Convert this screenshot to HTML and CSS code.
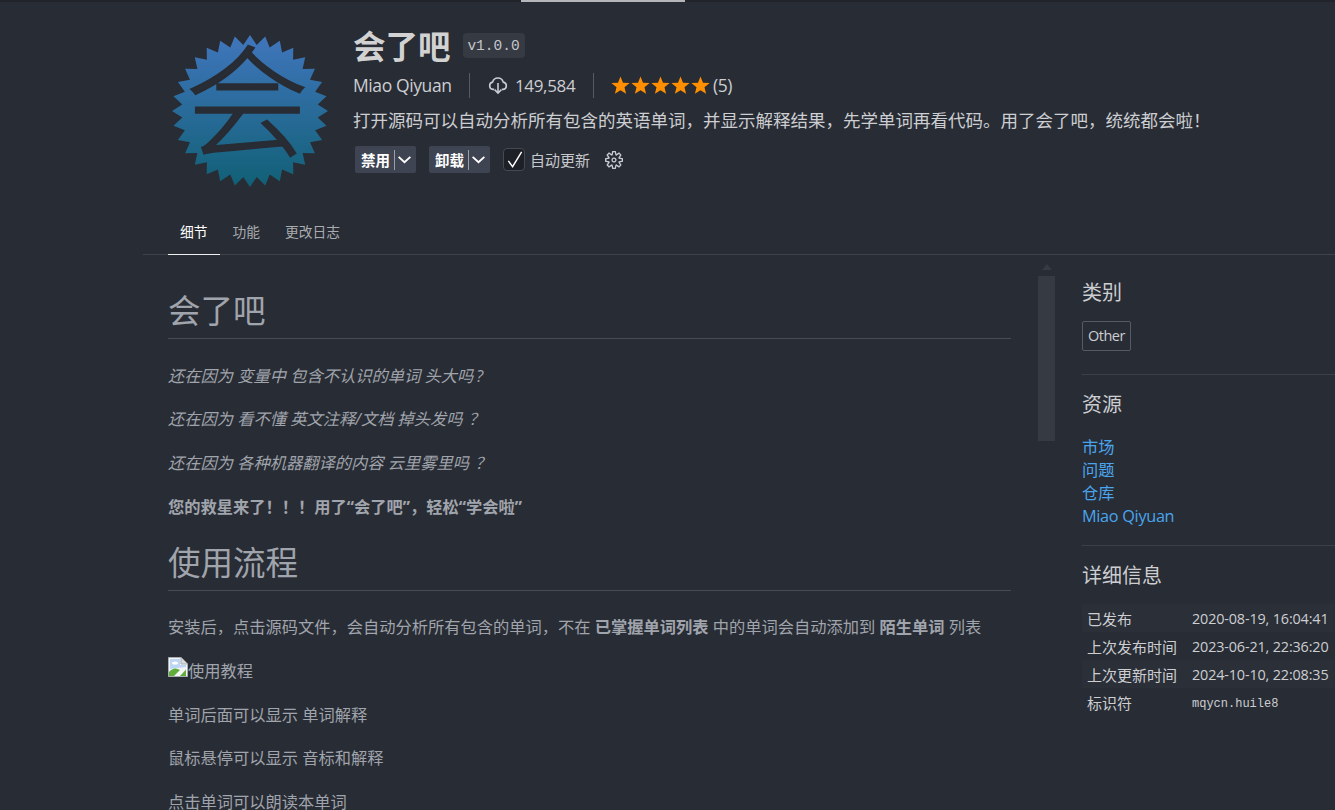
FILE: index.html
```html
<!DOCTYPE html>
<html lang="zh-CN">
<head>
<meta charset="utf-8">
<title>会了吧</title>
<link rel="stylesheet" href="styles.css">
</head>
<body>
<div class="topstrip"><div class="topstrip-active"></div></div>
<div class="page">
  <header class="header">
    <svg class="logo" viewBox="-78 -78 156 156" preserveAspectRatio="none">
      <defs>
        <linearGradient id="lg" x1="0" y1="0" x2="0" y2="1">
          <stop offset="0" stop-color="#4076bd"/>
          <stop offset="1" stop-color="#116076"/>
        </linearGradient>
      </defs>
      <polygon fill="url(#lg)" points="0,-78 6.7,-67.7 15.2,-76.5 19.7,-65.1 29.8,-72.1 32.1,-60 43.3,-64.9 43.1,-52.6 55.2,-55.2 52.6,-43.1 64.9,-43.3 60,-32.1 72.1,-29.8 65.1,-19.7 76.5,-15.2 67.7,-6.7 78,0 67.7,6.7 76.5,15.2 65.1,19.7 72.1,29.8 60,32.1 64.9,43.3 52.6,43.1 55.2,55.2 43.1,52.6 43.3,64.9 32.1,60 29.8,72.1 19.7,65.1 15.2,76.5 6.7,67.7 0,78 -6.7,67.7 -15.2,76.5 -19.7,65.1 -29.8,72.1 -32.1,60 -43.3,64.9 -43.1,52.6 -55.2,55.2 -52.6,43.1 -64.9,43.3 -60,32.1 -72.1,29.8 -65.1,19.7 -76.5,15.2 -67.7,6.7 -78,0 -67.7,-6.7 -76.5,-15.2 -65.1,-19.7 -72.1,-29.8 -60,-32.1 -64.9,-43.3 -52.6,-43.1 -55.2,-55.2 -43.1,-52.6 -43.3,-64.9 -32.1,-60 -29.8,-72.1 -19.7,-65.1 -15.2,-76.5 -6.7,-67.7"/>
      <text class="logo-glyph" x="-3" y="37" text-anchor="middle">会</text>
    </svg>
    <div class="details">
      <div class="title-row">
        <span class="title">会了吧</span>
        <span class="version">v1.0.0</span>
      </div>
      <div class="meta-row">
        <span class="author">Miao Qiyuan</span>
        <span class="sep"></span>
        <span class="installs">
          <svg class="cloud" viewBox="0 0 20 20" fill="none" stroke="#c8ccd2" stroke-width="1.6">
            <path d="M6.2 14.4H5a3.7 3.7 0 0 1-.4-7.3 5.5 5.5 0 0 1 10.6 0 3.7 3.7 0 0 1 .1 7.3h-1.5"/>
            <path d="M10 8v10M6.6 14.6l3.4 3.4 3.4-3.4"/>
          </svg>
          149,584
        </span>
        <span class="sep"></span>
        <span class="rating">
          <svg class="star" viewBox="0 0 20 20"><polygon points="10,0.5 12.6,7 19.6,7.4 14.2,11.9 15.9,18.8 10,15 4.1,18.8 5.8,11.9 0.4,7.4 7.4,7"/></svg>
          <svg class="star" viewBox="0 0 20 20"><polygon points="10,0.5 12.6,7 19.6,7.4 14.2,11.9 15.9,18.8 10,15 4.1,18.8 5.8,11.9 0.4,7.4 7.4,7"/></svg>
          <svg class="star" viewBox="0 0 20 20"><polygon points="10,0.5 12.6,7 19.6,7.4 14.2,11.9 15.9,18.8 10,15 4.1,18.8 5.8,11.9 0.4,7.4 7.4,7"/></svg>
          <svg class="star" viewBox="0 0 20 20"><polygon points="10,0.5 12.6,7 19.6,7.4 14.2,11.9 15.9,18.8 10,15 4.1,18.8 5.8,11.9 0.4,7.4 7.4,7"/></svg>
          <svg class="star" viewBox="0 0 20 20"><polygon points="10,0.5 12.6,7 19.6,7.4 14.2,11.9 15.9,18.8 10,15 4.1,18.8 5.8,11.9 0.4,7.4 7.4,7"/></svg>
          <span class="rating-count">(5)</span>
        </span>
      </div>
      <div class="description">打开源码可以自动分析所有包含的英语单词，并显示解释结果，先学单词再看代码。用了会了吧，统统都会啦！</div>
      <div class="actions">
        <div class="action-btn">
          <span class="action-label">禁用</span>
          <span class="action-div"></span>
          <svg class="chev" viewBox="0 0 16 16" fill="none" stroke="#fff" stroke-width="1.8"><path d="M2.5 5.5L8 10.5l5.5-5"/></svg>
        </div>
        <div class="action-btn">
          <span class="action-label">卸载</span>
          <span class="action-div"></span>
          <svg class="chev" viewBox="0 0 16 16" fill="none" stroke="#fff" stroke-width="1.8"><path d="M2.5 5.5L8 10.5l5.5-5"/></svg>
        </div>
        <span class="checkbox">
          <svg class="check" viewBox="0 0 20 20" fill="none" stroke="#fff" stroke-width="1.5"><path d="M3.5 11.5l4.5 6L17.5 2"/></svg>
        </span>
        <span class="auto-label">自动更新</span>
        <svg class="gear" viewBox="0 0 24 24" fill="#c8ccd2">
          <path fill-rule="evenodd" clip-rule="evenodd" d="M19.85 8.75l4.15.83v4.84l-4.15.83 2.35 3.52-3.43 3.43-3.52-2.35-.83 4.15H9.58l-.83-4.15-3.52 2.35-3.43-3.43 2.35-3.52L0 14.42V9.58l4.15-.83L1.8 5.23 5.23 1.8l3.52 2.35L9.58 0h4.84l.83 4.15 3.52-2.35 3.43 3.43-2.35 3.52zm-1.57 5.07l4-.81v-2l-4-.81-.54-1.3 2.29-3.43-1.43-1.43-3.43 2.29-1.3-.54-.81-4h-2l-.81 4-1.3.54-3.43-2.29-1.43 1.43L6.38 8.9l-.54 1.3-4 .81v2l4 .81.54 1.3-2.29 3.43 1.43 1.43 3.43-2.29 1.3.54.81 4h2l.81-4 1.3-.54 3.43 2.29 1.43-1.43-2.29-3.43.54-1.3zm-8.186-4.672A3.43 3.43 0 0 1 12 8.57 3.44 3.44 0 0 1 15.43 12a3.43 3.43 0 1 1-5.336-2.852zm.956 4.274c.281.188.612.288.95.288A1.7 1.7 0 0 0 13.71 12a1.71 1.71 0 1 0-2.66 1.422z"/>
        </svg>
      </div>
    </div>
  </header>
  <nav class="tabs">
    <span class="tab tab-active">细节</span>
    <span class="tab">功能</span>
    <span class="tab">更改日志</span>
  </nav>
  <div class="body-row">
    <main class="readme">
      <h1 class="rh">会了吧</h1>
      <p class="rp"><em>还在因为 变量中 包含不认识的单词 头大吗<span class="qm">?</span></em></p>
      <p class="rp"><em>还在因为 看不懂 英文注释/文档 掉头发吗<span class="qf">？</span></em></p>
      <p class="rp"><em>还在因为 各种机器翻译的内容 云里雾里吗<span class="qf">？</span></em></p>
      <p class="rp"><strong>您的救星来了！！！用了“会了吧”，轻松“学会啦”</strong></p>
      <h1 class="rh rh-second">使用流程</h1>
      <p class="rp">安装后，点击源码文件，会自动分析所有包含的单词，不在 <strong>已掌握单词列表</strong> 中的单词会自动添加到 <strong>陌生单词</strong> 列表</p>
      <p class="rp rp-img"><svg class="broken" viewBox="0 0 20 20">
        <path d="M0.5 0.5H13L19.5 7V19.5H0.5Z" fill="#f4f5f6" stroke="#a9adb2"/>
        <path d="M13 0.5V7H19.5" fill="#d8dadc" stroke="#a9adb2"/>
        <path d="M2 2H12V8H18V10L2 12Z" fill="#bcd6f4"/>
        <ellipse cx="7" cy="6" rx="3" ry="1.6" fill="#fff"/>
        <path d="M1 19V15Q6 9 12 13L6 19Z" fill="#5fae3c"/>
        <path d="M12 19L18 12.5V19Z" fill="#5fae3c"/>
      </svg>使用教程</p>
      <p class="rp">单词后面可以显示 单词解释</p>
      <p class="rp">鼠标悬停可以显示 音标和解释</p>
      <p class="rp">点击单词可以朗读本单词</p>
    </main>
    <div class="scrollbar">
      <div class="scroll-arrow"></div>
      <div class="scroll-thumb"></div>
    </div>
    <aside class="sidebar">
      <section class="side-section side-first">
        <h2 class="side-title">类别</h2>
        <span class="tag">Other</span>
      </section>
      <section class="side-section side-res">
        <h2 class="side-title">资源</h2>
        <div class="links">
          <a class="link">市场</a>
          <a class="link">问题</a>
          <a class="link">仓库</a>
          <a class="link link-latin">Miao Qiyuan</a>
        </div>
      </section>
      <section class="side-section side-last">
        <h2 class="side-title">详细信息</h2>
        <div class="info">
          <div class="info-row info-alt"><span class="info-key">已发布</span><span class="info-val">2020-08-19, 16:04:41</span></div>
          <div class="info-row"><span class="info-key">上次发布时间</span><span class="info-val">2023-06-21, 22:36:20</span></div>
          <div class="info-row info-alt"><span class="info-key">上次更新时间</span><span class="info-val">2024-10-10, 22:08:35</span></div>
          <div class="info-row"><span class="info-key">标识符</span><code class="info-code">mqycn.huile8</code></div>
        </div>
      </section>
    </aside>
  </div>
</div>
</body>
</html>
```

FILE: styles.css
```css
* { box-sizing: border-box; }
html, body {
  margin: 0;
  height: 810px;
  overflow: hidden;
  background: #282c34;
}
body {
  font-family: "Open Sans", "Noto Sans CJK SC", sans-serif;
  color: #ccced2;
  font-size: 16.25px;
}
.topstrip {
  height: 2px;
  background: #21252b;
  padding-left: 521px;
}
.topstrip-active {
  width: 164px;
  height: 2px;
  background: #b4b6b9;
}
.page { padding-left: 143px; }

/* header */
.header {
  display: flex;
  height: 203px;
  padding-left: 29px;
}
.logo {
  width: 156px;
  height: 152px;
  margin-top: 33px;
  flex: none;
  overflow: visible;
}
.logo-glyph {
  font-family: "Noto Sans CJK SC", sans-serif;
  font-size: 125px;
  font-weight: 300;
  fill: #282c34;
  stroke: #282c34;
  stroke-width: 1.6px;
}
.details {
  margin-left: 25px;
  padding-top: 26px;
  display: flex;
  flex-direction: column;
  white-space: nowrap;
}
.title-row {
  display: flex;
  align-items: center;
  height: 38px;
}
.title {
  font-size: 32.5px;
  font-weight: 700;
  line-height: 38px;
  color: #d2d2d2;
}
.version {
  margin-left: 12px;
  margin-top: -3px;
  height: 25px;
  width: 62px;
  display: flex;
  align-items: center;
  justify-content: center;
  border-radius: 4px;
  background: #363a43;
  font-family: "Liberation Mono", monospace;
  font-size: 14.5px;
  color: #c4c6ca;
}
.meta-row {
  display: flex;
  align-items: center;
  margin-top: 6px;
  height: 26px;
  font-size: 17.5px;
}
.author { width: 116px; letter-spacing: -0.4px; }
.sep {
  width: 1px;
  height: 25px;
  background: #565a62;
  flex: none;
}
.installs {
  display: flex;
  align-items: center;
  margin-left: 18px;
  width: 105px;
  font-size: 17px;
  letter-spacing: -0.35px;
}
.cloud { width: 20px; height: 20px; margin-right: 7px; }
.rating {
  display: flex;
  align-items: center;
  margin-left: 17px;
}
.star {
  width: 19px;
  height: 19px;
  margin-right: 1px;
  fill: #ff8e00;
}
.rating-count { margin-left: 2px; letter-spacing: -0.4px; }
.description {
  margin-top: 10px;
  font-size: 17.5px;
  line-height: 24px;
}
.actions {
  display: flex;
  align-items: center;
  margin-top: 14px;
  padding-left: 2px;
}
.action-btn {
  display: flex;
  align-items: center;
  width: 61px;
  height: 27px;
  margin-right: 13px;
  padding-left: 6px;
  border-radius: 2px;
  background: #3e4452;
  color: #fff;
}
.action-label {
  font-size: 14.5px;
  font-weight: 700;
  width: 33px;
}
.action-div {
  width: 1px;
  height: 20px;
  background: #9a9ea6;
}
.chev { width: 17px; height: 17px; margin-left: 1px; }
.checkbox {
  width: 22px;
  height: 23px;
  border: 1px solid #444952;
  border-radius: 4px;
  background: #1d2026;
  display: flex;
  align-items: center;
  justify-content: center;
}
.check { width: 19px; height: 19px; flex: none; }
.auto-label {
  margin-left: 5px;
  font-size: 15px;
  color: #c6c8cc;
}
.gear {
  width: 18px;
  height: 18px;
  margin-left: 15px;
}

/* tabs */
.tabs {
  display: flex;
  height: 50px;
  padding-left: 25px;
  border-bottom: 1px solid #3e424a;
}
.tab {
  height: 50px;
  line-height: 54px;
  padding: 0 12px;
  margin-right: 1px;
  font-size: 13.75px;
  color: #a8abb0;
}
.tab-active {
  color: #fff;
  border-bottom: 1px solid #f0f0f0;
}

/* body */
.body-row { display: flex; }
.readme {
  width: 843px;
  margin-left: 25px;
  color: #a0a4ac;
  line-height: 22.75px;
  flex: none;
}
.rh {
  margin: 0 0 25.5px;
  padding-top: 34px;
  padding-bottom: 6px;
  font-size: 32.5px;
  font-weight: 400;
  line-height: 43px;
  border-bottom: 1px solid #484c54;
  color: #a0a4ac;
}
.rh-second { margin-top: 0.5px; padding-top: 1px; }
.rp { margin: 0 0 21px; }
.rp-img { display: flex; align-items: flex-start; }
.qm { margin-left: 3px; }
.qf { margin-left: 6px; }
.broken { width: 20px; height: 20px; margin-top: -3px; flex: none; }
.scrollbar {
  width: 17px;
  margin-left: 27px;
  flex: none;
}
.scroll-arrow {
  width: 0;
  height: 0;
  margin: 9px auto 6px;
  border-left: 5px solid transparent;
  border-right: 5px solid transparent;
  border-bottom: 6px solid #363a43;
}
.scroll-thumb {
  height: 165px;
  background: #363a43;
}
.sidebar {
  margin-left: 27px;
  flex: 1;
  min-width: 0;
}
.side-section {
  border-bottom: 1px solid #3b3f47;
  padding-bottom: 23px;
  margin-bottom: 15px;
}
.side-first { padding-top: 23px; }
.side-res { padding-bottom: 17px; }
.side-last { border-bottom: 0; }
.side-title {
  margin: 0 0 13px;
  font-size: 20px;
  font-weight: 400;
  line-height: 30px;
  color: #ccced2;
}
.tag {
  display: inline-block;
  width: 49px;
  height: 30px;
  border: 1px solid #565a62;
  border-radius: 2px;
  line-height: 28px;
  text-align: center;
  font-size: 14.5px;
  letter-spacing: -0.5px;
}
.links { display: flex; flex-direction: column; padding-top: 3px; line-height: 23px; }
.link { color: #4aa5ee; }
.link-latin { letter-spacing: -0.3px; }
.info-row {
  display: flex;
  align-items: center;
  height: 28px;
  padding-left: 5px;
  font-size: 15px;
  color: #ccced2;
  white-space: nowrap;
}
.info-alt { background: #2b2f38; }
.info-key { width: 105px; flex: none; }
.info-val { font-size: 14.4px; letter-spacing: -0.15px; }
.info-code {
  font-family: "Liberation Mono", monospace;
  font-size: 12px;
  padding-top: 3px;
}
```
